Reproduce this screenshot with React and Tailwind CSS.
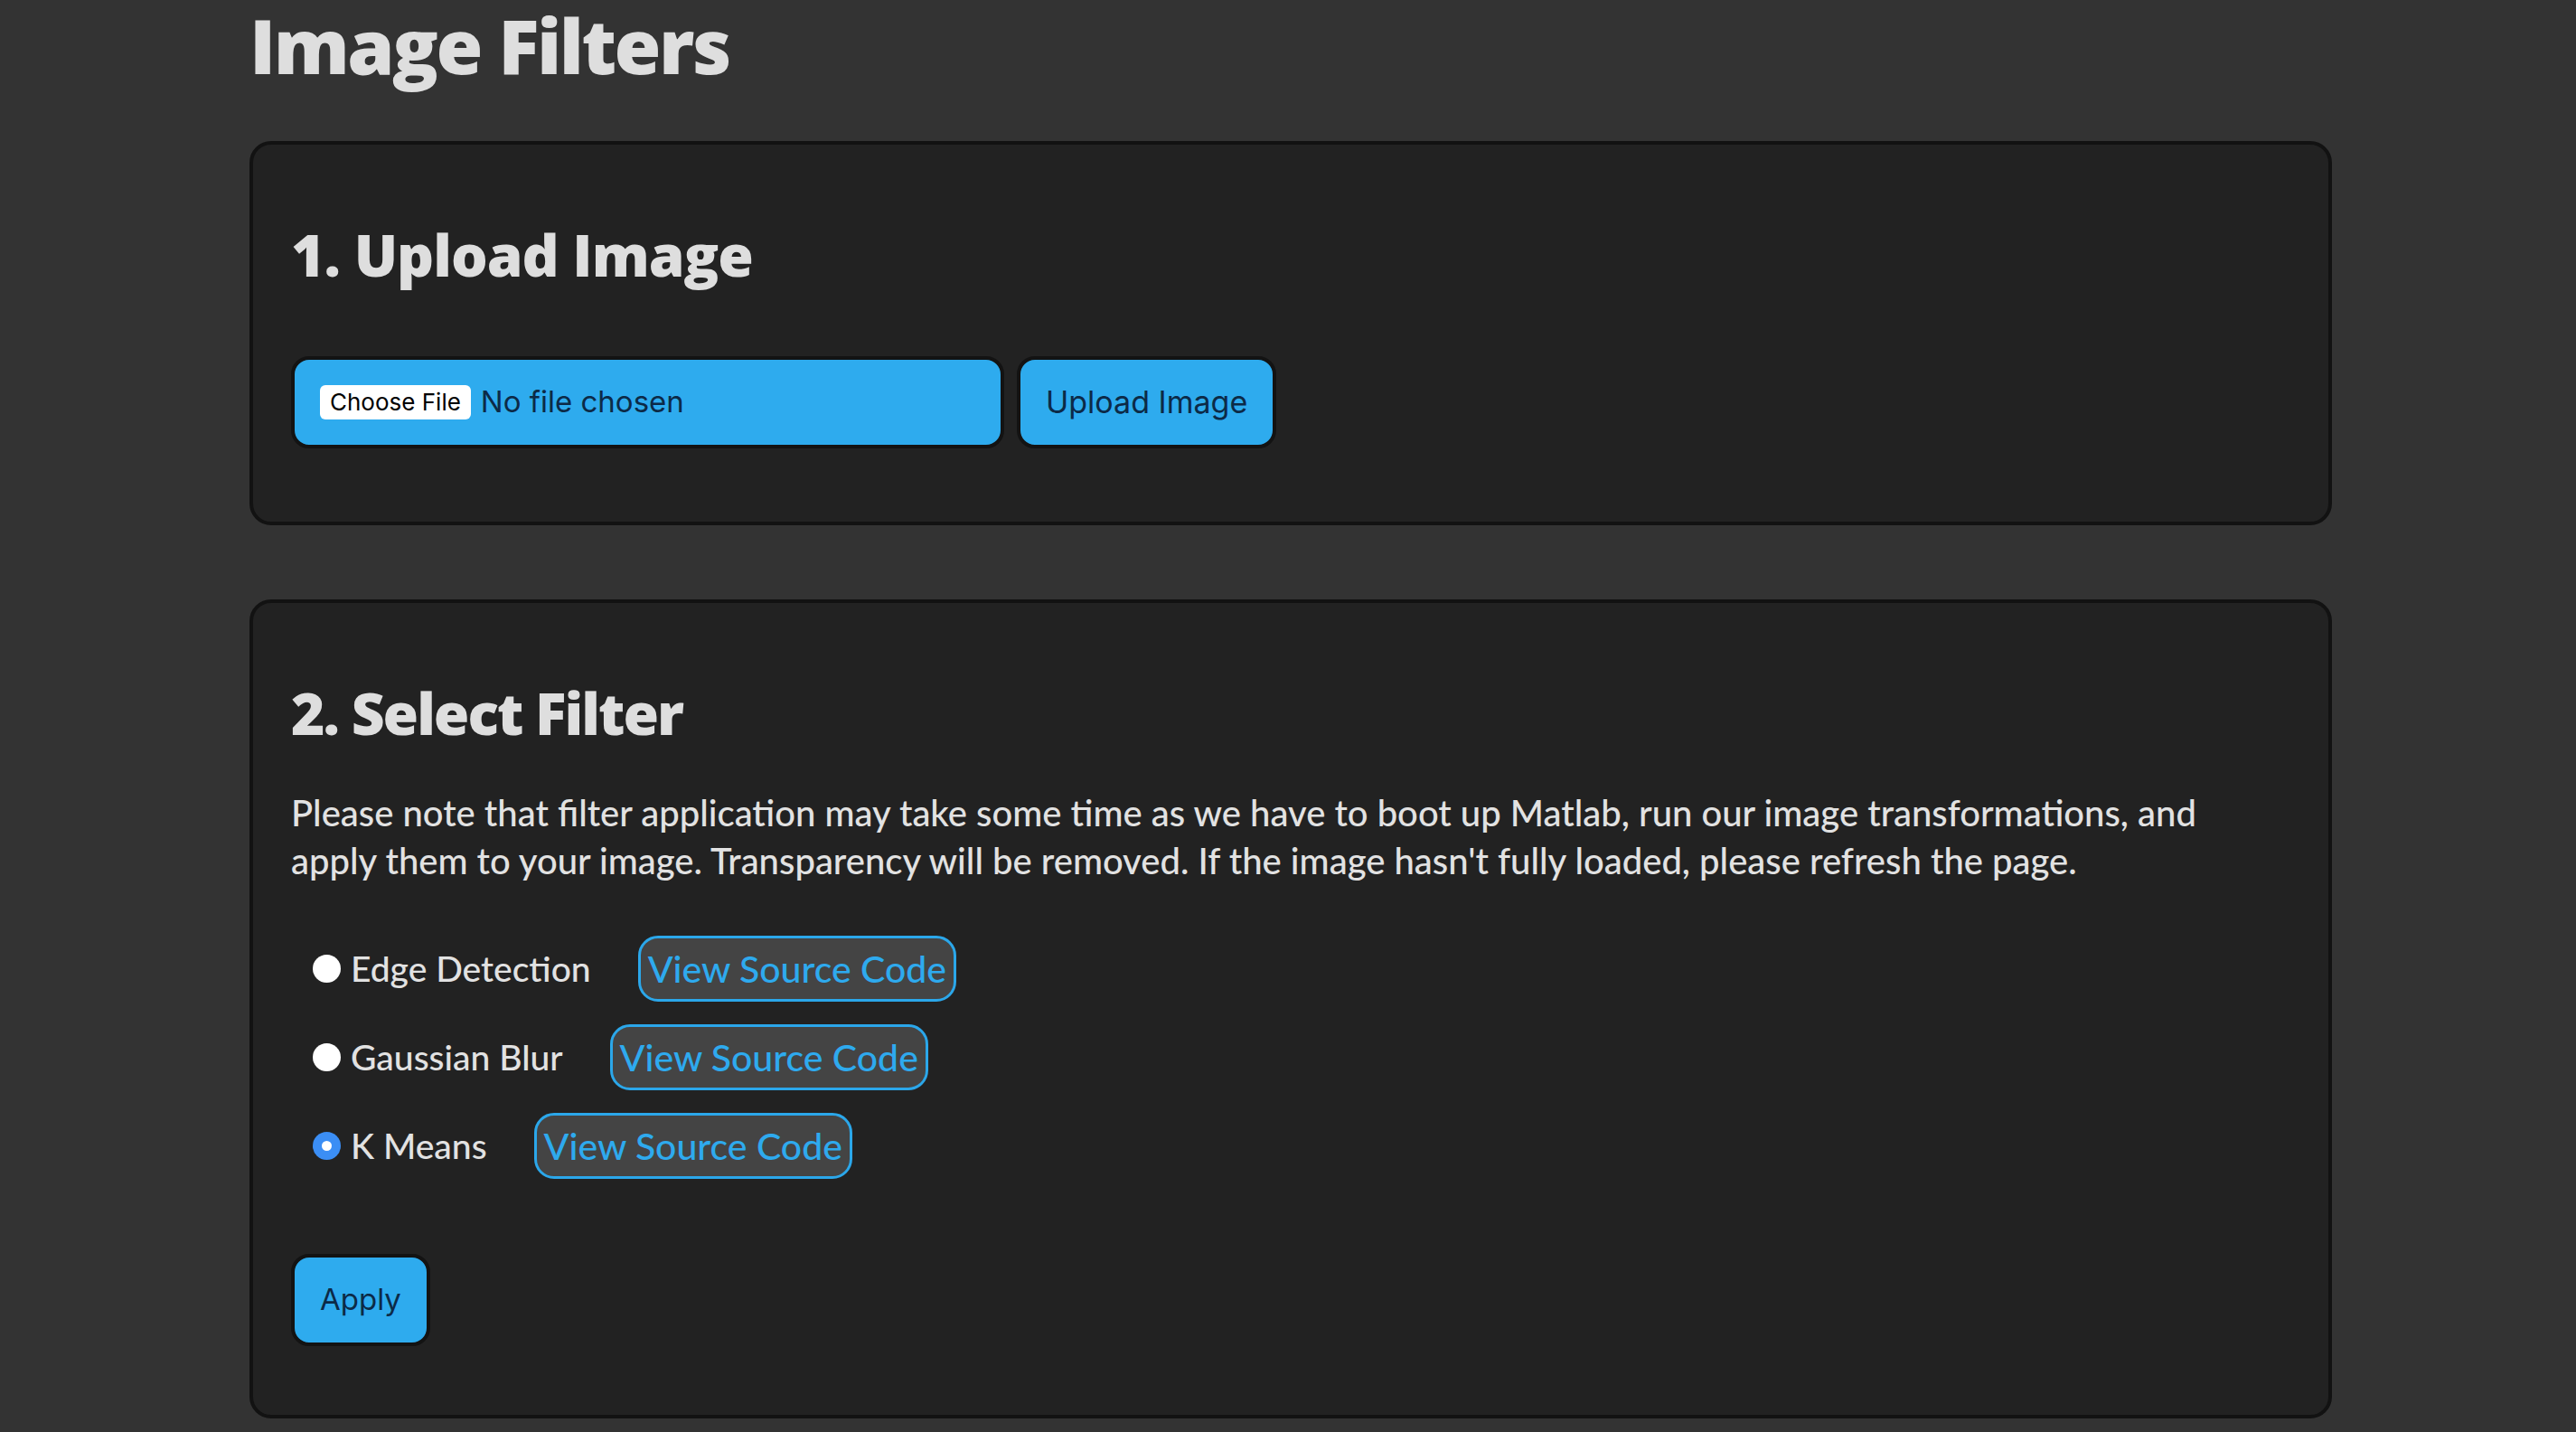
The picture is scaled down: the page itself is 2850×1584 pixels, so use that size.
import { useState } from "react";

const filters = [
  { id: "edge", label: "Edge Detection" },
  { id: "gaussian", label: "Gaussian Blur" },
  { id: "kmeans", label: "K Means" },
];

const futura = { fontFamily: "Lato, 'Noto Sans', sans-serif" };
const heavy = { fontFamily: "'Open Sans', Lato, sans-serif" };
const system = { fontFamily: "Inter, 'Liberation Sans', sans-serif" };

const Radio = ({ checked }) =>
  checked ? (
    <span className="flex h-[31px] w-[31px] shrink-0 items-center justify-center rounded-full bg-[#3b8ef5]">
      <span className="h-[11px] w-[11px] rounded-full bg-white"></span>
    </span>
  ) : (
    <span className="h-[31px] w-[31px] shrink-0 rounded-full bg-white"></span>
  );

const App = () => {
  const [selected, setSelected] = useState("kmeans");

  return (
    <div className="min-h-screen bg-[#333333] text-[#dedede]" style={futura}>
      <div className="ml-[276px] w-[2304px]">
        <h1
          className="pt-[2px] text-[84px] font-extrabold leading-[1.15] tracking-[-2.5px]"
          style={heavy}
        >
          Image Filters
        </h1>

        {/* Upload card */}
        <section className="mt-[57px] rounded-[24px] border-4 border-[#121212] bg-[#222222] pt-[90px] pb-[81px] pl-[42px]">
          <h2
            className="text-[64px] font-extrabold leading-none tracking-[-1px]"
            style={heavy}
          >
            1. Upload Image
          </h2>
          <div className="mt-[80px] flex items-center gap-[14px]">
            <div
              className="flex h-[102px] w-[789px] items-center rounded-[20px] border-4 border-[#131313] bg-[#2eabee] pl-[28px]"
              style={system}
            >
              <span className="rounded-[6px] bg-white px-[11px] py-[3px] text-[26px] leading-[32px] text-black">
                Choose File
              </span>
              <span className="ml-[11px] text-[33px] text-[#0c2a47]">
                No file chosen
              </span>
            </div>
            <button
              className="h-[102px] rounded-[20px] border-4 border-[#131313] bg-[#2eabee] px-[28px] text-[34px] text-[#0c2a47]"
              style={system}
            >
              Upload Image
            </button>
          </div>
        </section>

        {/* Filter card */}
        <section className="mt-[82px] rounded-[24px] border-4 border-[#121212] bg-[#222222] pt-[90px] pb-[76px] pl-[42px]">
          <h2
            className="text-[64px] font-extrabold leading-none tracking-[-2px]"
            style={heavy}
          >
            2. Select Filter
          </h2>
          <p className="mt-[52px] text-[40px] font-medium leading-[53px] text-[#e2e2e2]">
            Please note that filter application may take some time as we have
            to boot up Matlab, run our image transformations, and
            <br />
            apply them to your image. Transparency will be removed. If the
            image hasn't fully loaded, please refresh the page.
          </p>

          <div className="mt-[44px] flex flex-col">
            {filters.map((f) => (
              <div
                key={f.id}
                className="flex h-[98px] items-center"
                onClick={() => setSelected(f.id)}
              >
                <div className="ml-[24px] flex items-center gap-[11px]">
                  <Radio checked={selected === f.id} />
                  <span className="text-[39px] font-medium text-[#e2e2e2]">
                    {f.label}
                  </span>
                </div>
                <button className="ml-[52px] h-[73px] rounded-[22px] border-[3px] border-[#2ba7ea] bg-[#444444] px-[8px] text-[41px] font-medium text-[#2eaaee]">
                  View Source Code
                </button>
              </div>
            ))}
          </div>

          <button
            className="mt-[70px] h-[102px] rounded-[20px] border-4 border-[#131313] bg-[#2eabee] px-[28px] text-[33px] text-[#0c2a47]"
            style={system}
          >
            Apply
          </button>
        </section>
      </div>
    </div>
  );
};

export default App;
